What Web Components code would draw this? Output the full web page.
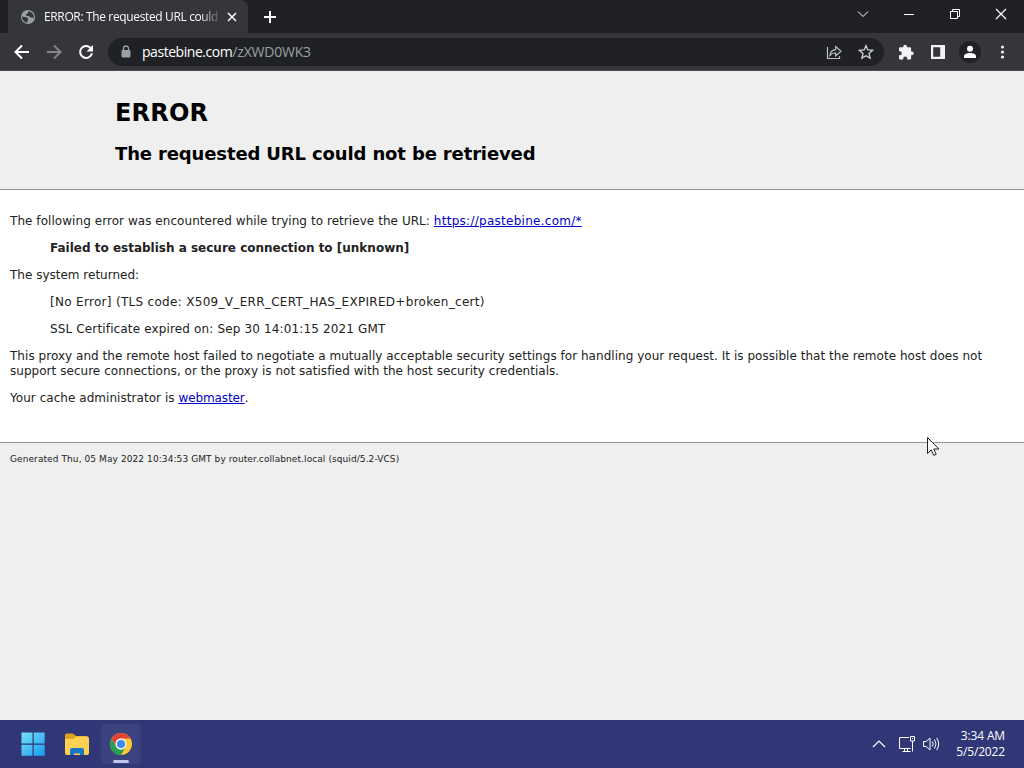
<!DOCTYPE html>
<html lang="en">
<head>
<meta charset="utf-8">
<title>ERROR: The requested URL could not be retrieved</title>
<style>
  html, body { margin: 0; width: 1024px; height: 768px; overflow: hidden; }
  body { font-family: "Open Sans", "Noto Sans", sans-serif; background: #efefef; }
</style>
</head>
<body>
<desktop-screen>
  <browser-tabs slot="tabs">ERROR: The requested URL could not be retrieved</browser-tabs>
  <browser-toolbar slot="toolbar">
    <span slot="host">pastebine.com</span>
    <span slot="path">/zXWD0WK3</span>
  </browser-toolbar>
  <error-page slot="page">
    <span slot="title">ERROR</span>
    <span slot="subtitle">The requested URL could not be retrieved</span>
  </error-page>
  <task-bar slot="taskbar">
    <span slot="time">3:34 AM</span>
    <span slot="date">5/5/2022</span>
  </task-bar>
</desktop-screen>

<script>
class DesktopScreen extends HTMLElement {
  connectedCallback() {
    this.attachShadow({ mode: 'open' });
    this.shadowRoot.innerHTML = `
      <style>
        :host {
          display: grid;
          grid-template-rows: 33px 38px 649px 48px;
          width: 1024px;
          height: 768px;
          position: relative;
        }

        /* mouse pointer floats over the page */
        .pointer {
          position: absolute;
          left: 926px;
          top: 436px;
        }
      </style>
      <slot name="tabs"></slot>
      <slot name="toolbar"></slot>
      <slot name="page"></slot>
      <slot name="taskbar"></slot>
      <svg class="pointer" width="14" height="22" viewBox="0 0 14 22">
        <path d="M1.5 1.5v16l3.8-3.6 2.4 5.5 2.5-1.1-2.4-5.3h5.1z" fill="#fff" stroke="#222" stroke-width="1"/>
      </svg>
    `;
  }
}

class BrowserTabs extends HTMLElement {
  connectedCallback() {
    this.attachShadow({ mode: 'open' });
    this.shadowRoot.innerHTML = `
      <style>
        :host {
          display: flex;
          background: #202124;
          color: #f8f9fa;
        }

        .tab {
          box-sizing: border-box;
          display: flex;
          align-items: center;
          width: 240px;
          height: 33px;
          margin-left: 8px;
          padding-left: 12px;
          background: #35363a;
          border-radius: 0 8px 0 0;
        }

        .label {
          width: 176px;
          margin-left: 8px;
          overflow: hidden;
          white-space: nowrap;
          font-size: 12px;
          line-height: 18px;
          letter-spacing: -0.36px;
          -webkit-mask-image: linear-gradient(to right, #000 156px, transparent 178px);
          mask-image: linear-gradient(to right, #000 156px, transparent 178px);
        }

        .close { margin-left: 7px; }
        .add { margin: 10px 0 0 15px; }

        .controls {
          display: flex;
          margin-left: auto;
        }

        .controls svg {
          width: 46px;
          height: 28px;
          fill: none;
          stroke: #fff;
        }
      </style>
      <div class="tab">
        <svg width="16" height="16" viewBox="0 0 16 16">
          <circle cx="8" cy="8" r="7" fill="#9aa0a6"/>
          <path d="M2 7.5l5 1 1.5 1.7-1 1.5-.3 2C4 13.200 2 10.500 2 7.500zM8.500 2.200l-1 2.200-1.500.8.5 1.700 2.500.2 1.500 1.500 2.200-.2 1 1.200c.8-3.500-1.300-6.700-5.200-7.400z" fill="#35363a"/>
        </svg>
        <div class="label"><slot></slot></div>
        <svg class="close" width="10" height="10" viewBox="0 0 10 10">
          <path d="M1 1l8 8M9 1L1 9" stroke="#f1f3f4" stroke-width="1.7"/>
        </svg>
      </div>
      <svg class="add" width="14" height="14" viewBox="0 0 14 14">
        <path d="M7 1v12M1 7h12" stroke="#fff" stroke-width="2"/>
      </svg>
      <div class="controls">
        <svg viewBox="0 0 46 28"><path d="M18 11.500l5 5 5-5"/></svg>
        <svg viewBox="0 0 46 28"><path d="M18 14.500h10"/></svg>
        <svg viewBox="0 0 46 28"><path d="M18.500 11.500h7v7h-7zM20.500 11.500v-2h7v7h-2"/></svg>
        <svg viewBox="0 0 46 28"><path d="M18 9l10 10M28 9L18 19" stroke-width="1.200"/></svg>
      </div>
    `;
  }
}

class BrowserToolbar extends HTMLElement {
  connectedCallback() {
    this.attachShadow({ mode: 'open' });
    this.shadowRoot.innerHTML = `
      <style>
        :host {
          box-sizing: border-box;
          display: flex;
          align-items: center;
          background: #35363a;
          border-bottom: 1px solid #4a4b4f;
          color: #fff;
        }

        svg { flex: none; }

        .nav {
          display: flex;
          gap: 16px;
          margin-left: 14px;
        }

        .address {
          box-sizing: border-box;
          display: flex;
          align-items: center;
          width: 776px;
          height: 28px;
          margin: 1px 0 0 14px;
          padding: 0 10px 0 10px;
          border-radius: 14px;
          background: #202124;
        }

        .url {
          flex: 1;
          margin-left: 8px;
          font-size: 14px;
          line-height: 20px;
          white-space: nowrap;
        }

        .host { letter-spacing: -0.45px; }
        .path { color: #9aa0a6; letter-spacing: -0.2px; }
        .address .star { margin-left: 16px; }

        .actions {
          display: flex;
          align-items: center;
          margin-left: 14px;
          gap: 16px;
        }

        .avatar { margin: 0 -4px; }
      </style>
      <div class="nav">
        <svg width="16" height="16" viewBox="0 0 16 16"><path d="M15 8H2M8 1.500L1.500 8 8 14.500" fill="none" stroke="#fff" stroke-width="2"/></svg>
        <svg width="16" height="16" viewBox="0 0 16 16"><path d="M1 8h13M8 1.500L14.500 8 8 14.500" fill="none" stroke="#85868a" stroke-width="2"/></svg>
        <svg width="16" height="16" viewBox="0 0 16 16">
          <path d="M13.200 4.700A6 6 0 1 0 14 9.200" fill="none" stroke="#fff" stroke-width="2"/>
          <path d="M15 1v6.500H8.500z" fill="#fff"/>
        </svg>
      </div>
      <div class="address">
        <svg width="16" height="16" viewBox="0 0 16 16">
          <rect x="3.500" y="6" width="9" height="7.500" rx="1" fill="#9aa0a6"/>
          <path d="M5.500 6V4.500a2.500 2.500 0 0 1 5 0V6" fill="none" stroke="#9aa0a6" stroke-width="1.300"/>
        </svg>
        <div class="url"><span class="host"><slot name="host"></slot></span><span class="path"><slot name="path"></slot></span></div>
        <svg width="16" height="16" viewBox="0 0 16 16" fill="none" stroke="#bdc1c6" stroke-width="1.200">
          <path d="M1.500 3v11.500h12V12"/>
          <path d="M4 11.500c.3-3.700 2.400-5.600 5.700-5.800V2.500l5.300 4.800-5.300 4.700V9C7.200 8.900 5.300 9.700 4 11.500z"/>
        </svg>
        <svg class="star" width="16" height="16" viewBox="0 0 16 16">
          <path d="M8 1.700l1.900 4.300 4.700.4-3.600 3.100 1.100 4.600L8 11.700l-4.100 2.400L5 9.500 1.400 6.400l4.700-.4z" fill="none" stroke="#d0d3d7" stroke-width="1.300"/>
        </svg>
      </div>
      <div class="actions">
        <svg width="16" height="16" viewBox="0 0 16 16">
          <path d="M1 4.500a1.200 1.200 0 0 1 1.200-1.200h3.100v-.8a1.800 1.800 0 0 1 3.600 0v.8h3a1.200 1.200 0 0 1 1.200 1.200v3h.8a1.850 1.850 0 0 1 0 3.700h-.8v3a1.200 1.200 0 0 1-1.200 1.200H9.200v-.8a2 2 0 0 0-4 0v.8h-3A1.200 1.200 0 0 1 1 14.200v-3h.8a2 2 0 0 0 0-4H1z" fill="#f1f3f4"/>
        </svg>
        <svg width="16" height="16" viewBox="0 0 16 16">
          <path d="M1 1h14v14H1zM3.200 3.200v9.600h7V3.200z" fill="#f1f3f4" fill-rule="evenodd"/>
        </svg>
        <svg class="avatar" width="24" height="24" viewBox="0 0 24 24">
          <circle cx="12" cy="12" r="11" fill="#202124"/>
          <circle cx="12" cy="8.800" r="3" fill="#fff"/>
          <path d="M6 18v-1.700c0-4.300 12-4.300 12 0V18z" fill="#fff"/>
        </svg>
        <svg width="16" height="16" viewBox="0 0 16 16" fill="#f1f3f4">
          <circle cx="8.500" cy="3" r="1.600"/><circle cx="8.500" cy="8" r="1.600"/><circle cx="8.500" cy="13" r="1.600"/>
        </svg>
      </div>
    `;
  }
}

class ErrorPage extends HTMLElement {
  connectedCallback() {
    this.attachShadow({ mode: 'open' });
    this.shadowRoot.innerHTML = `
      <style>
        :host {
          display: block;
          background: #efefef;
          color: #222;
          font: 12px/15px Verdana, "DejaVu Sans", sans-serif;
          white-space: nowrap;
        }

        h1, h2, p, blockquote { margin: 0; }

        .titles {
          box-sizing: border-box;
          height: 118px;
          padding: 27px 0 0 115px;
          color: #000;
        }

        h1 { font-size: 24px; line-height: 30px; letter-spacing: 0.2px; }
        h2 { font-size: 18px; line-height: 22px; margin-top: 15px; letter-spacing: -0.135px; }

        .content {
          box-sizing: border-box;
          height: 254px;
          padding: 24px 10px 0;
          background: #fff;
          border-top: 1px solid #929292;
          border-bottom: 1px solid #929292;
        }

        .content > * { margin-bottom: 12px; }
        blockquote { margin-left: 40px; }
        a { color: #0000cc; text-decoration: underline; }

        .intro { letter-spacing: 0.057px; }
        .intro a { letter-spacing: 0.27px; }
        .code { letter-spacing: 0.305px; }
        .expiry { letter-spacing: 0.145px; }
        .hint { letter-spacing: 0.036px; }
        .admin { letter-spacing: 0.045px; }
        .admin a { letter-spacing: -0.1px; }

        .footer {
          padding: 9px 10px;
          font-size: 9px;
          line-height: 15px;
          letter-spacing: 0.086px;
        }
      </style>
      <div class="titles">
        <h1><slot name="title"></slot></h1>
        <h2><slot name="subtitle"></slot></h2>
      </div>
      <div class="content">
        <p class="intro">The following error was encountered while trying to retrieve the URL: <a href="#">https://pastebine.com/*</a></p>
        <blockquote><b>Failed to establish a secure connection to [unknown]</b></blockquote>
        <p>The system returned:</p>
        <blockquote class="code">[No Error] (TLS code: X509_V_ERR_CERT_HAS_EXPIRED+broken_cert)</blockquote>
        <blockquote class="expiry">SSL Certificate expired on: Sep 30 14:01:15 2021 GMT</blockquote>
        <p class="hint">This proxy and the remote host failed to negotiate a mutually acceptable security settings for handling your request. It is possible that the remote host does not<br>support secure connections, or the proxy is not satisfied with the host security credentials.</p>
        <p class="admin">Your cache administrator is <a href="#">webmaster</a>.</p>
      </div>
      <div class="footer">Generated Thu, 05 May 2022 10:34:53 GMT by router.collabnet.local (squid/5.2-VCS)</div>
    `;
  }
}

class TaskBar extends HTMLElement {
  connectedCallback() {
    this.attachShadow({ mode: 'open' });
    this.shadowRoot.innerHTML = `
      <style>
        :host {
          display: flex;
          align-items: center;
          justify-content: space-between;
          background: #2f3777;
          color: #fff;
        }

        .apps {
          display: flex;
          align-items: center;
          gap: 4px;
          margin-left: 13px;
        }

        .app {
          display: grid;
          place-items: center;
          width: 40px;
          height: 40px;
          border-radius: 4px;
        }

        .active {
          background: #3b437e;
          position: relative;
        }

        .active::after {
          content: '';
          position: absolute;
          left: 12px;
          bottom: 1px;
          width: 16px;
          height: 3px;
          border-radius: 2px;
          background: #c0c6ee;
        }

        .tray {
          display: flex;
          align-items: center;
          margin-right: 19px;
          fill: none;
          stroke: #fff;
        }

        .clock {
          margin-left: 15px;
          width: 50px;
          text-align: right;
          font-size: 12px;
          line-height: 16px;
          letter-spacing: -0.15px;
          white-space: nowrap;
        }
      </style>
      <div class="apps">
        <div class="app">
          <svg width="24" height="24" viewBox="0 0 24 24">
            <defs>
              <linearGradient id="win" x1="0" y1="0" x2="24" y2="24" gradientUnits="userSpaceOnUse">
                <stop offset="0" stop-color="#7be4fb"/><stop offset="1" stop-color="#159aee"/>
              </linearGradient>
            </defs>
            <path d="M.5.500h11v11H.5zM12.700.500h11v11h-11zM.5 12.700h11v11H.5zM12.700 12.700h11v11h-11z" fill="url(#win)"/>
          </svg>
        </div>
        <div class="app">
          <svg width="26" height="24" viewBox="0 0 26 24">
            <path d="M1 3.500Q1 1.500 3 1.500h6l3 2.500h10q2 0 2 2v3H1z" fill="#dca416"/>
            <path d="M1 7h8l3-2.500h11q2 0 2 2V21q0 2-2 2H3q-2 0-2-2z" fill="#ffd052"/>
            <path d="M6 23v-5q0-2 2-2h10q2 0 2 2v5h-4v-1.500h-6V23z" fill="#1877c9"/>
          </svg>
        </div>
        <div class="app active">
          <svg width="24" height="24" viewBox="0 0 24 24">
            <circle cx="12" cy="12" r="11" fill="#fcc934"/>
            <path d="M2.470 6.500A11 11 0 0 1 21.530 6.500H12A5.500 5.500 0 0 0 7.240 14.750z" fill="#e04335"/>
            <path d="M2.470 6.500A11 11 0 0 0 12 23L16.760 14.750A5.500 5.500 0 0 1 7.240 14.750z" fill="#269d50"/>
            <circle cx="12" cy="12" r="5.500" fill="#fff"/>
            <circle cx="12" cy="12" r="4.300" fill="#438af0"/>
          </svg>
        </div>
      </div>
      <div class="tray">
        <svg width="14" height="14" viewBox="0 0 14 14"><path d="M1 10l6-6 6 6" stroke-width="1.200"/></svg>
        <svg style="margin-left:12px" width="18" height="18" viewBox="0 0 18 18">
          <path d="M11 2.500H1.500v11h11M4.500 16.500h8M6.500 14v2M9.500 14v2M12.500 1.500h4v4.500h-4zM14.500 6v10.500M14 3.500h1"/>
        </svg>
        <svg style="margin-left:6px" width="18" height="16" viewBox="0 0 18 16">
          <path d="M1.500 5.500H4L8 2v12l-4-3.500H1.500zM10.300 5.500q1.700 2.500 0 5M12.500 3.500q3 4.500 0 9M14.700 2q4 6 0 12"/>
        </svg>
        <div class="clock"><slot name="time"></slot><br><slot name="date"></slot></div>
      </div>
    `;
  }
}

customElements.define('desktop-screen', DesktopScreen);
customElements.define('browser-tabs', BrowserTabs);
customElements.define('browser-toolbar', BrowserToolbar);
customElements.define('error-page', ErrorPage);
customElements.define('task-bar', TaskBar);
</script>
</body>
</html>
